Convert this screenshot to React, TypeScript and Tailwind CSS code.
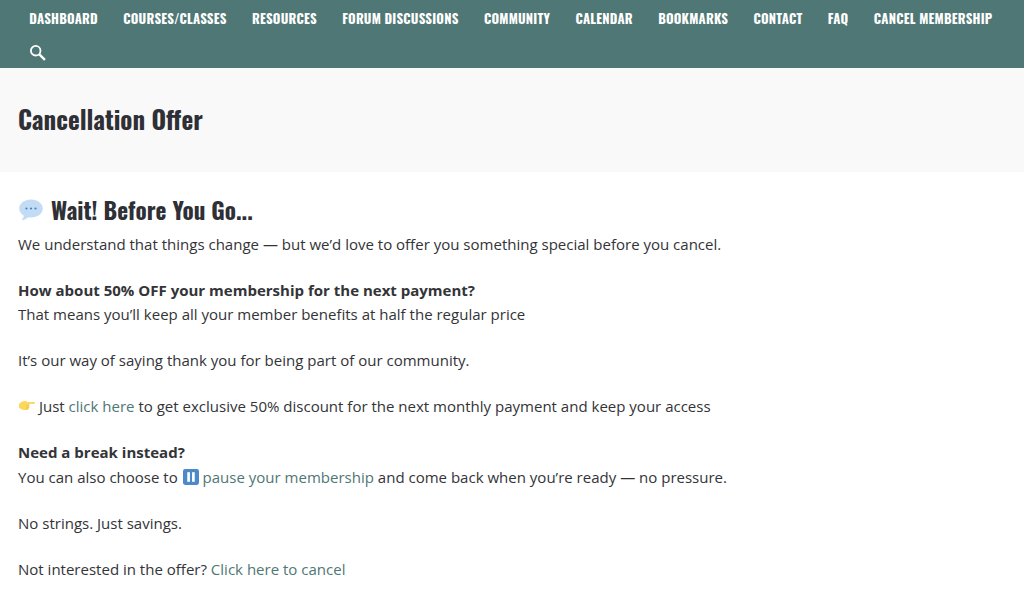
function BubbleIcon() {
  return (
    <svg width="26" height="24" viewBox="0 0 26 24" className="shrink-0">
      <path d="M13 1.500C6.400 1.500 1.200 5.400 1.200 10.500c0 3 1.800 5.500 4.600 7.200-.2 1.600-1 3.200-2.200 4.600 2.600-.3 5-1.400 6.800-3 .8.100 1.700.2 2.600.2 6.600 0 11.800-4 11.800-9S19.600 1.500 13 1.500Z" fill="#c3dcf5" />
      <circle cx="8.500" cy="10.500" r="1.100" fill="#4a7fb8" />
      <circle cx="13" cy="10.500" r="1.100" fill="#4a7fb8" />
      <circle cx="17.500" cy="10.500" r="1.100" fill="#4a7fb8" />
    </svg>
  )
}

function HandIcon() {
  return (
    <svg width="17" height="14" viewBox="0 0 16 13" className="inline-block align-[-1px]">
      <path d="M1 4.500C2.500 3 4.500 1.800 6.500 1.800c1.200 0 2 .5 2.600 1.200l5.600-.3c.8 0 1.200.5 1.200 1s-.5 1-1.200 1H10.500c.3.400.3 1 .1 1.500.3.500.2 1.100-.1 1.500.1.600-.1 1.100-.6 1.400-.1.700-.7 1.100-1.400 1.100H6c-2 0-3.500-1-5-2Z" fill="#fbd75b" />
      <path d="M8 6.200h2.500M8 7.800h2.300M7.800 9.300h1.900" stroke="#e3b23c" strokeWidth=".5" fill="none" />
    </svg>
  )
}

function PauseIcon() {
  return (
    <svg width="16" height="16" viewBox="0 0 15 15" className="inline-block align-[-2px] ml-[1px]">
      <rect width="15" height="15" rx="2" fill="#4b89c8" />
      <rect x="4" y="3" width="2.500" height="9" fill="white" />
      <rect x="8.500" y="3" width="2.500" height="9" fill="white" />
    </svg>
  )
}

export default function App() {
  const nav = ["DASHBOARD", "COURSES/CLASSES", "RESOURCES", "FORUM DISCUSSIONS", "COMMUNITY", "CALENDAR", "BOOKMARKS", "CONTACT", "FAQ", "CANCEL MEMBERSHIP"]
  const link = "text-[#4f7775]"
  return (
    <div className="min-h-[613px] bg-white font-['Open_Sans','Noto_Sans',sans-serif] text-[15.02px] leading-[24.5px] text-[#333438]">
      <header className="bg-[#4f7775] h-[68px] px-[16.6px]">
        <nav className="flex flex-wrap text-[13px] tracking-[0.2px] font-bold font-['Oswald','Roboto_Condensed','Liberation_Sans_Narrow','Roboto',sans-serif] text-white">
          {nav.map((n) => (
            <a key={n} className="px-[12.7px] leading-[37px] whitespace-nowrap">{n}</a>
          ))}
          <a className="px-3 h-[31px] flex items-center">
            <svg width="17" height="17" viewBox="0 0 16 16" fill="none" stroke="white" strokeWidth="1.700"><circle cx="6.300" cy="6.300" r="4.500" /><path d="M9.700 9.700 15 15" strokeWidth="2.200" /></svg>
          </a>
        </nav>
      </header>
      <div className="bg-[#f9f9f9] h-[104px] px-[18px] flex items-center">
        <h1 className="text-[25px] leading-[36px] -mt-[2px] font-bold text-[#2f3036] font-['Oswald','Roboto_Condensed','Liberation_Sans_Narrow','Roboto',sans-serif]">Cancellation Offer</h1>
      </div>
      <main className="px-[18px] pt-[23px]">
        <h2 className="text-[23.2px] leading-[30px] font-bold text-[#2f3036] flex items-center gap-[7px] mb-[6.5px] font-['Oswald','Roboto_Condensed','Liberation_Sans_Narrow','Roboto',sans-serif]">
          <BubbleIcon />Wait! Before You Go...
        </h2>
        <p className="mb-[21.5px]">We understand that things change — but we’d love to offer you something special before you cancel.</p>
        <p className="mb-[21.5px]"><b>How about 50% OFF your membership for the next payment?</b><br />That means you’ll keep all your member benefits at half the regular price</p>
        <p className="mb-[21.5px]">It’s our way of saying thank you for being part of our community.</p>
        <p className="mb-[21.5px]"><HandIcon /> Just <a className={link}>click here</a> to get exclusive 50% discount for the next monthly payment and keep your access</p>
        <p className="mb-[21.5px]"><b>Need a break instead?</b><br />You can also choose to <PauseIcon /> <a className={link}>pause your membership</a> and come back when you’re ready — no pressure.</p>
        <p className="mb-[21.5px]">No strings. Just savings.</p>
        <p>Not interested in the offer? <a className={link}>Click here to cancel</a></p>
      </main>
    </div>
  )
}
